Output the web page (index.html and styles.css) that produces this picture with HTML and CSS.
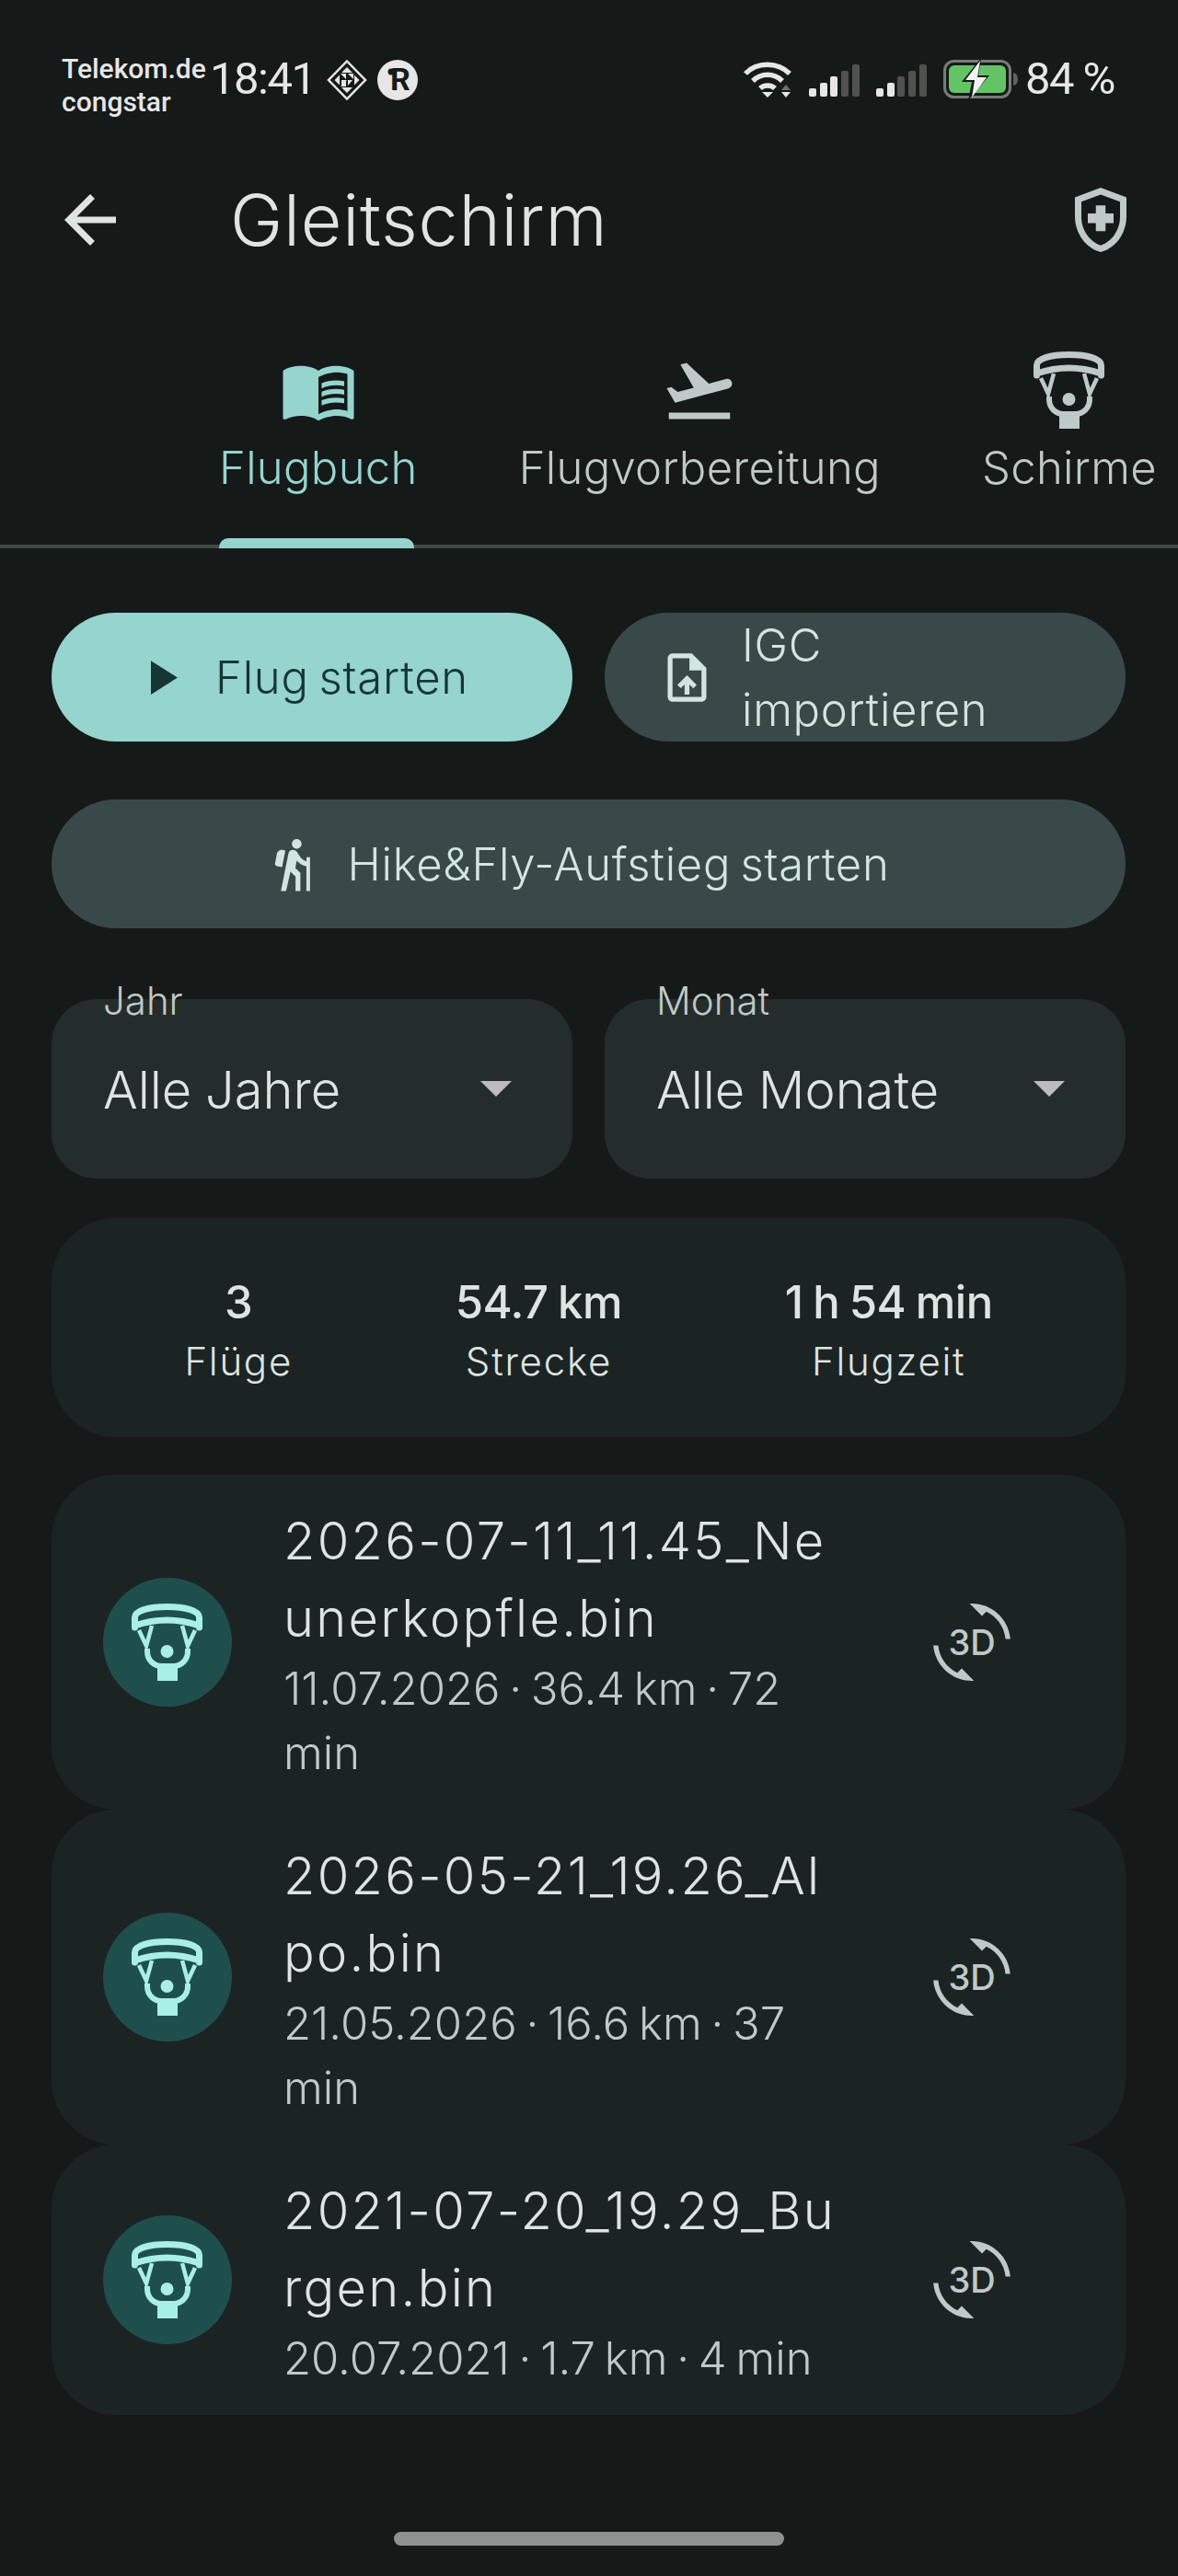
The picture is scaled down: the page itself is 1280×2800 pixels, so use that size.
FILE: index.html
```html
<!DOCTYPE html>
<html lang="de">
<head>
    <meta charset="UTF-8">
    <meta name="viewport" content="width=device-width, initial-scale=1.0">
    <title>Gleitschirm - Flugbuch</title>
    <link rel="stylesheet" href="styles.css">
</head>
<body>
    <svg class="defs" width="0" height="0">
        <symbol id="glider" viewBox="0 0 78 84">
            <path d="M3.5 26V15C3.5 8 18 3.5 38.5 3.5S73.5 8 73.5 15V26M3.5 24Q38.5 12 73.5 24" fill="none" stroke="currentColor" stroke-width="7" stroke-linecap="round"/>
            <path d="M8 29L16 46L22 24M69 29L61 46L55 24" fill="none" stroke="currentColor" stroke-width="4.5"/>
            <path d="M17 49V52C17 62 25 68 32 68H46C53 68 61 62 61 52V49" fill="none" stroke="currentColor" stroke-width="6"/>
            <rect x="28" y="68" width="22" height="16" fill="currentColor"/>
            <circle cx="38.5" cy="52" r="7" fill="currentColor"/>
        </symbol>
        <symbol id="rotate" viewBox="0 0 24 24">
            <path d="M7.52 21.48C4.25 19.94 1.91 16.76 1.55 13H.05C.56 19.16 5.71 24 12 24l.66-.03-3.81-3.81-1.33 1.32z" fill="currentColor"/>
            <path d="M12 0l-.66.03 3.81 3.81 1.33-1.33c3.27 1.55 5.61 4.72 5.96 8.48h1.5C23.44 4.84 18.29 0 12 0z" fill="currentColor"/>
        </symbol>
    </svg>

    <div class="status-bar">
        <div class="carrier">Telekom.de<br>congstar</div>
        <span class="clock">18:41</span>
        <svg class="status-diamond" viewBox="0 0 44 44">
            <path d="M22 1.5L42 22L22 42.5L2 22Z" fill="none" stroke="#e6e6e6" stroke-width="2.5"/>
            <path d="M22 8L28 14H16ZM15 15H21V21ZM29 15H23L29 21ZM8.5 22L14 16.5V27.5ZM35.5 22L30 16.5V27.5ZM16 22H22L16 28ZM28 22H23V28ZM15 29H21V23ZM22 36L16 30H28Z" fill="#e6e6e6"/>
        </svg>
        <svg class="status-round" viewBox="0 0 44 44">
            <circle cx="22" cy="22" r="22" fill="#e6e6e6"/>
            <text x="25" y="33" class="status-round-text">R</text>
            <circle cx="15" cy="13" r="3.5" fill="#151a19"/>
        </svg>
        <div class="status-right">
            <svg class="status-wifi" viewBox="0 0 54 40">
                <path d="M3 14C15 1 38 1 51 14M11 22C20 13 34 13 43 22M19 30C23 26 31 26 35 30" fill="none" stroke="#e6e6e6" stroke-width="5.5"/>
                <path d="M21 34H33L27 40Z" fill="#e6e6e6"/>
                <path d="M42 32H52L47 26Z" fill="#6b6f6e"/>
                <path d="M42 34H52L47 40Z" fill="#e6e6e6"/>
            </svg>
            <div class="signal">
                <i class="bar bar-1"></i><i class="bar bar-2"></i><i class="bar bar-3"></i><i class="bar bar-4 off"></i><i class="bar bar-5 off"></i>
            </div>
            <div class="signal">
                <i class="bar bar-1"></i><i class="bar bar-2"></i><i class="bar bar-3 off"></i><i class="bar bar-4 off"></i><i class="bar bar-5 off"></i>
            </div>
            <svg class="status-battery" viewBox="0 0 82 42">
                <rect x="1.5" y="1.5" width="71" height="39" rx="10" fill="none" stroke="#777b7a" stroke-width="3"/>
                <rect x="6" y="6" width="62" height="30" rx="6" fill="#63c466"/>
                <path d="M76 14Q81 15 81 21Q81 27 76 28Z" fill="#5d6160"/>
                <path d="M41 -2L20 24H31L27 44L50 17H38Z" fill="#151a19"/>
                <path d="M40 1L24 22H34L31 41L47 19H37Z" fill="#f2f2f2"/>
            </svg>
            <span class="clock">84 %</span>
        </div>
    </div>

    <div class="toolbar">
        <svg class="icon-84 back-icon" viewBox="0 0 24 24"><path d="M20 11H7.83l5.59-5.59L12 4l-8 8 8 8 1.41-1.41L7.83 13H20v-2z"/></svg>
        <h1 class="toolbar-title">Gleitschirm</h1>
        <svg class="icon-84 shield-icon" viewBox="0 0 24 24"><path d="M10.5 13H8v-3h2.5V7.5h3V10H16v3h-2.5v2.5h-3V13zM12 2L4 5v6.09c0 5.05 3.41 9.76 8 10.91 4.59-1.15 8-5.86 8-10.91V5l-8-3zm6 9.09c0 4-2.55 7.7-6 8.83-3.45-1.13-6-4.82-6-8.83v-4.7l6-2.25 6 2.25v4.7z"/></svg>
    </div>

    <div class="tabs">
        <div class="tab active">
            <svg class="icon-84" viewBox="0 0 24 24">
                <path d="M21,5c-1.11-0.35-2.33-0.5-3.5-0.5c-1.95,0-4.05,0.4-5.5,1.5c-1.45-1.1-3.55-1.5-5.5-1.5S2.45,4.9,1,6v14.65c0,0.25,0.25,0.5,0.5,0.5c0.1,0,0.15-0.05,0.25-0.05C3.1,20.45,5.05,20,6.5,20c1.95,0,4.05,0.4,5.5,1.5c1.35-0.85,3.8-1.5,5.5-1.5c1.65,0,3.35,0.3,4.75,1.05c0.1,0.05,0.15,0.05,0.25,0.05c0.25,0,0.5-0.25,0.5-0.5V6C22.4,5.55,21.75,5.25,21,5z M21,18.5c-1.1-0.35-2.3-0.5-3.5-0.5c-1.7,0-4.15,0.65-5.5,1.5V8c1.35-0.85,3.8-1.5,5.5-1.5c1.2,0,2.4,0.15,3.5,0.5V18.5z"/>
                <path d="M17.5,10.5c0.88,0,1.73,0.09,2.5,0.26V9.24C19.21,9.09,18.36,9,17.5,9c-1.7,0-3.24,0.29-4.5,0.83v1.66C14.13,10.85,15.7,10.5,17.5,10.5z"/>
                <path d="M13,12.49v1.66c1.13-0.64,2.7-0.99,4.5-0.99c0.88,0,1.73,0.09,2.5,0.26V11.9c-0.79-0.15-1.64-0.24-2.5-0.24C15.8,11.66,14.26,11.96,13,12.49z"/>
                <path d="M17.5,14.33c-1.7,0-3.24,0.29-4.5,0.83v1.66c1.13-0.64,2.7-0.99,4.5-0.99c0.88,0,1.73,0.09,2.5,0.26v-1.52C19.21,14.41,18.36,14.33,17.5,14.33z"/>
            </svg>
            <span class="tab-label">Flugbuch</span>
        </div>
        <div class="tab">
            <svg class="icon-84" viewBox="0 0 24 24"><path d="M2.5 19h19v2h-19zm19.57-9.36c-.21-.8-1.04-1.28-1.84-1.06L14.92 10l-6.9-6.43-1.93.51 4.14 7.17-4.97 1.33-1.97-1.54-1.45.39 1.82 3.16.77 1.33 1.6-.43 5.31-1.42 4.35-1.16L21 11.49c.81-.23 1.28-1.05 1.07-1.85z"/></svg>
            <span class="tab-label">Flugvorbereitung</span>
        </div>
        <div class="tab">
            <svg class="icon-84 glider-tab"><use href="#glider"/></svg>
            <span class="tab-label">Schirme</span>
        </div>
    </div>

    <main class="content">
        <div class="button-row">
            <div class="btn btn-primary">
                <svg class="icon-63" viewBox="0 0 24 24"><path d="M8 5v14l11-7z"/></svg>
                <span>Flug starten</span>
            </div>
            <div class="btn btn-tonal btn-import">
                <svg class="icon-63" viewBox="0 0 24 24"><path d="M14 2H6c-1.1 0-1.99.9-1.99 2L4 20c0 1.1.89 2 1.99 2H18c1.1 0 2-.9 2-2V8l-6-6zm4 18H6V4h7v5h5v11zM8 15.01l1.41 1.41L11 14.84V19h2v-4.16l1.59 1.59L16 15.01 12.01 11z"/></svg>
                <span>IGC<br>importieren</span>
            </div>
        </div>

        <div class="btn btn-tonal btn-wide">
            <svg class="icon-63" viewBox="0 0 24 24"><path d="M13.5,5.5c1.1,0,2-0.9,2-2s-0.9-2-2-2s-2,0.9-2,2S12.4,5.5,13.5,5.5z M17.5,10.78c-1.23-0.37-2.22-1.17-2.8-2.18l-1-1.6c-0.41-0.65-1.11-1-1.84-1c-0.78,0-1.59,0.5-1.78,1.44S7,23,7,23h2.1l1.8-8l2.1,2v6h2v-7.5l-2.1-2l0.6-3c1,1.15,2.41,2.01,4,2.34V23H19V9h-1.5L17.5,10.78z M7.43,13.13l-2.12-0.41c-0.54-0.11-0.9-0.63-0.79-1.17l0.76-3.93c0.21-1.08,1.26-1.79,2.34-1.58l1.16,0.23L7.43,13.13z"/></svg>
            <span>Hike&amp;Fly-Aufstieg starten</span>
        </div>

        <div class="filter-row">
            <div class="filter">
                <span class="filter-label">Jahr</span>
                <span class="filter-value">Alle Jahre</span>
                <i class="filter-arrow"></i>
            </div>
            <div class="filter">
                <span class="filter-label">Monat</span>
                <span class="filter-value">Alle Monate</span>
                <i class="filter-arrow"></i>
            </div>
        </div>

        <div class="stats">
            <div class="stat"><b>3</b><span>Flüge</span></div>
            <div class="stat"><b>54.7 km</b><span>Strecke</span></div>
            <div class="stat"><b>1 h 54 min</b><span>Flugzeit</span></div>
        </div>

        <div class="flights">
            <div class="flight">
                <div class="flight-badge"><svg class="glider-badge"><use href="#glider"/></svg></div>
                <div class="flight-text">
                    <div class="flight-name">2026-07-11_11.45_Neunerkopfle.bin</div>
                    <div class="flight-meta">11.07.2026 · 36.4 km · 72 min</div>
                </div>
                <div class="rotate-3d">
                    <svg class="icon-84"><use href="#rotate"/></svg>
                    <span class="rotate-label">3D</span>
                </div>
            </div>
            <div class="flight">
                <div class="flight-badge"><svg class="glider-badge"><use href="#glider"/></svg></div>
                <div class="flight-text">
                    <div class="flight-name">2026-05-21_19.26_Alpo.bin</div>
                    <div class="flight-meta">21.05.2026 · 16.6 km · 37 min</div>
                </div>
                <div class="rotate-3d">
                    <svg class="icon-84"><use href="#rotate"/></svg>
                    <span class="rotate-label">3D</span>
                </div>
            </div>
            <div class="flight">
                <div class="flight-badge"><svg class="glider-badge"><use href="#glider"/></svg></div>
                <div class="flight-text">
                    <div class="flight-name">2021-07-20_19.29_Burgen.bin</div>
                    <div class="flight-meta">20.07.2021 · 1.7 km · 4 min</div>
                </div>
                <div class="rotate-3d">
                    <svg class="icon-84"><use href="#rotate"/></svg>
                    <span class="rotate-label">3D</span>
                </div>
            </div>
        </div>
    </main>

    <div class="home-indicator"></div>
</body>
</html>
```

FILE: styles.css
```css
* {
    box-sizing: border-box;
}
body {
    margin: 0;
    width: 1280px;
    height: 2800px;
    display: flex;
    flex-direction: column;
    background-color: #151a19;
    color: #dee4e2;
    font-family: Inter, Roboto, sans-serif;
    overflow: hidden;
}
.defs {
    position: absolute;
}
svg {
    fill: currentColor;
    flex: none;
}
.icon-84 {
    width: 84px;
    height: 84px;
}
.icon-63 {
    width: 63px;
    height: 63px;
}

/* status bar */
.status-bar {
    height: 180px;
    padding: 57px 69px 0 67px;
    display: flex;
    align-items: flex-start;
    color: #e6e6e6;
    font-family: Roboto, sans-serif;
}
.carrier {
    width: 161px;
    font-size: 30px;
    font-weight: 500;
    line-height: 36px;
}
.clock {
    font-size: 49px;
    line-height: 50px;
    margin-top: 4px;
    letter-spacing: -1.5px;
}
.status-diamond {
    width: 44px;
    height: 44px;
    margin: 8px 0 0 12px;
}
.status-round {
    width: 44px;
    height: 44px;
    margin: 8px 0 0 11px;
}
.status-round-text {
    font-size: 34px;
    font-weight: 700;
    fill: #151a19;
    text-anchor: middle;
}
.status-right {
    margin-left: auto;
    display: flex;
    align-items: flex-start;
}
.status-wifi {
    width: 54px;
    height: 40px;
    margin-top: 9px;
}
.signal {
    width: 55px;
    height: 35px;
    margin: 13px 0 0 18px;
    display: flex;
    align-items: flex-end;
    justify-content: space-between;
}
.bar {
    width: 8px;
    border-radius: 2px;
    background: #e6e6e6;
}
.bar.off {
    background: #50524f;
}
.bar-1 { height: 9px; }
.bar-2 { height: 15px; }
.bar-3 { height: 22px; }
.bar-4 { height: 28px; }
.bar-5 { height: 35px; }
.status-battery {
    width: 82px;
    height: 42px;
    margin: 8px 7px 0 18px;
    overflow: visible;
}

/* toolbar */
.toolbar {
    height: 118px;
    padding: 0 42px 0 56px;
    display: flex;
    align-items: center;
}
.back-icon {
    color: #dee4e2;
}
.shield-icon {
    color: #bfc9c7;
    margin-left: auto;
}
.toolbar-title {
    margin: 0 0 0 110px;
    font-size: 77px;
    font-weight: 300;
    letter-spacing: 0.8px;
}

/* tabs */
.tabs {
    height: 298px;
    padding: 84px 0 0 238px;
    display: flex;
    gap: 110px;
    border-bottom: 4px solid #3f4947;
}
.tab {
    display: flex;
    flex-direction: column;
    align-items: center;
    gap: 8px;
    color: #bfc9c7;
}
.tab-label {
    font-size: 49px;
    line-height: 70px;
    font-weight: 300;
    letter-spacing: 0.3px;
    white-space: nowrap;
}
.tab.active {
    color: #96d4ce;
    position: relative;
}
.tab.active::after {
    content: "";
    position: absolute;
    left: 0;
    right: 4px;
    top: 203px;
    height: 11px;
    background: #96d4ce;
    border-radius: 10px 10px 0 0;
}
.glider-tab {
    width: 78px;
    height: 84px;
}

/* buttons */
.content {
    padding: 70px 57px 0 56px;
}
.button-row {
    display: flex;
    gap: 35px;
}
.btn {
    height: 140px;
    border-radius: 70px;
    display: flex;
    align-items: center;
    gap: 28px;
    font-size: 49px;
    line-height: 70px;
    font-weight: 300;
    letter-spacing: 0.7px;
    word-spacing: -4px;
}
.btn span {
    padding-top: 2px;
}
.btn-primary,
.btn-import {
    width: 566px;
}
.btn-primary {
    padding-left: 87px;
    background: #96d4ce;
    color: #163635;
    font-weight: 350;
    letter-spacing: 0.8px;
}
.btn-tonal {
    background: #394949;
    color: #d2e5e2;
}
.btn-import {
    padding-left: 58px;
}
.btn-wide {
    margin-top: 63px;
    justify-content: center;
    padding-right: 26px;
}

/* filters */
.filter-row {
    margin-top: 77px;
    display: flex;
    gap: 35px;
}
.filter {
    width: 566px;
    height: 195px;
    border-radius: 49px;
    padding: 0 56px;
    background: #242d2b;
    display: flex;
    align-items: center;
    justify-content: space-between;
    position: relative;
}
.filter-label {
    position: absolute;
    left: 56px;
    top: -26px;
    font-size: 42px;
    line-height: 56px;
    font-weight: 300;
    color: #bfc9c7;
}
.filter-value {
    padding-top: 2px;
    font-size: 56px;
    font-weight: 300;
    word-spacing: -1px;
}
.filter-arrow {
    width: 0;
    height: 0;
    margin-right: 10px;
    border-left: 17px solid transparent;
    border-right: 17px solid transparent;
    border-top: 17px solid #bcbcbc;
}

/* stats */
.stats {
    margin-top: 43px;
    height: 238px;
    padding: 56px;
    border-radius: 70px;
    background: #1c2423;
    display: flex;
    justify-content: space-around;
}
.stat {
    display: flex;
    flex-direction: column;
    align-items: center;
}
.stat b {
    font-size: 49px;
    line-height: 72px;
    font-weight: 500;
    letter-spacing: -0.5px;
    word-spacing: -2px;
}
.stat span {
    font-size: 42px;
    line-height: 56px;
    font-weight: 300;
    letter-spacing: 1.75px;
}

/* flight list */
.flights {
    margin-top: 41px;
    display: flex;
    flex-direction: column;
}
.flight {
    padding: 30px 0 26px 56px;
    border-radius: 70px;
    background: #1c2423;
    display: flex;
    align-items: center;
}
.flight-badge {
    width: 140px;
    height: 140px;
    margin-top: -4px;
    border-radius: 50%;
    background: #1f4f4c;
    color: #a8efe6;
    display: flex;
    align-items: center;
    justify-content: center;
    flex: none;
}
.glider-badge {
    width: 78px;
    height: 84px;
}
.flight-text {
    width: 612px;
    margin: 0 94px 0 56px;
}
.flight-name {
    font-size: 56px;
    line-height: 84px;
    font-weight: 300;
    letter-spacing: 2.3px;
    word-break: break-all;
}
.flight-meta {
    font-size: 49px;
    line-height: 70px;
    font-weight: 300;
    word-spacing: -4px;
    color: #bfc9c7;
}
.rotate-3d {
    width: 84px;
    height: 84px;
    margin-top: -4px;
    color: #bfc9c7;
    position: relative;
    flex: none;
}
.rotate-label {
    position: absolute;
    inset: 0;
    display: flex;
    align-items: center;
    justify-content: center;
    font-size: 38px;
    font-weight: 500;
}

/* gesture bar */
.home-indicator {
    width: 424px;
    height: 15px;
    margin: auto auto 33px;
    border-radius: 8px;
    background: #8e9190;
}
```
